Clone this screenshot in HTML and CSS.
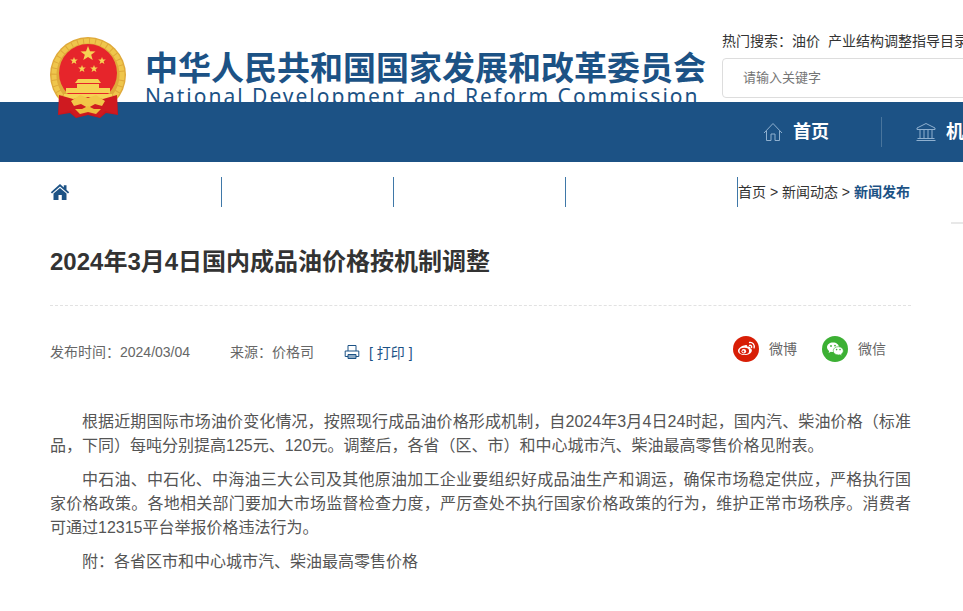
FILE: index.html
```html
<!DOCTYPE html>
<html lang="zh-CN">
<head>
  <meta charset="UTF-8" />
  <meta name="viewport" content="width=device-width, initial-scale=1.0"/>
  <title>2024年3月4日国内成品油价格按机制调整</title>
  <link rel="stylesheet" href="styles.css">
</head>
<body>
  <header class="header">
    <a class="logo" href="#">
      <svg class="emblem" viewBox="0 0 76 82" aria-hidden="true">
        <path d="M9 56L67 56 68 78 56 76 50 81 38 78 26 81 20 76 8 78Z" fill="#c8161d"/>
        <circle cx="38" cy="38" r="38" fill="#dfa93a"/>
        <circle cx="38" cy="38" r="34" fill="none" stroke="#efc64c" stroke-width="5" stroke-dasharray="5 1"/>
        <circle cx="38" cy="36" r="29" fill="#e6252b"/>
        <path d="M38 9l2 5.200 5.500.2-4.300 3.400 1.500 5.300-4.700-3-4.700 3 1.500-5.300-4.300-3.400 5.500-.2z" fill="#f6d254"/>
        <path d="M24 20l1 2.500 2.800.1-2.200 1.700.8 2.700-2.400-1.500-2.400 1.500.8-2.700-2.200-1.700 2.800-.1zM52 20l1 2.500 2.800.1-2.200 1.700.8 2.700-2.400-1.500-2.400 1.500.8-2.700-2.200-1.700 2.800-.1zM32 28l1 2.500 2.800.1-2.200 1.700.8 2.700-2.400-1.500-2.400 1.500.8-2.700-2.200-1.700 2.800-.1zM44 28l1 2.500 2.800.1-2.200 1.700.8 2.700-2.400-1.500-2.400 1.500.8-2.700-2.200-1.700 2.800-.1z" fill="#f6d254"/>
        <path d="M28 42h20l3 4H25zM27 47h22v4h11v5H16v-5h11zM14 57h48v5H14z" fill="#f6d254"/>
        <path d="M9 58l14 4 15-2 15 2 14-4v19l-12-3-5 6-12-4-12 4-5-6-12 3z" fill="#cf1a20"/>
        <path d="M21 64l9-6 8 3 8-3 9 6-3 5-7-2-7 4-7-4-7 2z" fill="#f2c648"/>
        <path d="M25 72l7 0 6-3 6 3 7 0-5 5-8-2-8 2z" fill="#eebd3f"/>
      </svg>
      <span class="logo-text">
        <span class="logo-cn">中华人民共和国国家发展和改革委员会</span>
        <span class="logo-en" lang="en">National Development and Reform Commission</span>
      </span>
    </a>
    <form class="search">
      <p class="hot">热门搜索：<a href="#">油价</a><a href="#">产业结构调整指导目录</a></p>
      <input class="search-input" type="text" placeholder="请输入关键字" aria-label="请输入关键字">
    </form>
  </header>

  <nav class="nav">
    <a class="nav-item" href="#">
      <svg class="nav-icon" viewBox="0 0 20 20" aria-hidden="true">
        <path d="M1 11L10 1.500l9 9.500M3.500 9v9.500h4.500v-6.500h4v6.500h4.500V9"/>
      </svg>
      首页
    </a>
    <a class="nav-item" href="#">
      <svg class="nav-icon" viewBox="0 0 20 20" aria-hidden="true">
        <path d="M1 6l9-4.500L19 6v1.500H1zM4 7.500v9M8 7.500v9M12 7.500v9M16 7.500v9M1.500 16.500h17M.5 18.500h19"/>
      </svg>
      机构设置
    </a>
  </nav>

  <div class="crumb-bar">
    <a class="crumb-cell" href="#" aria-label="首页">
      <svg class="home-icon" viewBox="0 0 20 18" aria-hidden="true">
        <path d="M10 1L.8 9.200l1.200 1.300L10 3.500l8 7 1.200-1.300-2.700-2.400V2.200h-2.700v2.200z"/>
        <path d="M3.500 10.500L10 5l6.500 5.500V17h-4.700v-5H8.500v5h-5z"/>
      </svg>
    </a>
    <span class="crumb-cell"></span>
    <span class="crumb-cell"></span>
    <span class="crumb-cell"></span>
    <div class="crumbs">
      <a href="#">首页</a> &gt; <a href="#">新闻动态</a> &gt; <a class="current" href="#">新闻发布</a>
    </div>
  </div>
  <div class="side-line"></div>

  <main class="article">
    <h1 class="title">2024年3月4日国内成品油价格按机制调整</h1>
    <div class="meta">
      <span class="date">发布时间：2024/03/04</span>
      <span class="source">来源：价格司</span>
      <button class="print" type="button">
        <svg class="print-icon" viewBox="0 0 16 16" aria-hidden="true">
          <path d="M4 7V1.500h8V7M4 12.500H1.200V7h13.600v5.500H12"/>
          <path d="M4 10.500h8v4H4z" fill="#8fabc4"/>
        </svg>
        [ 打印 ]
      </button>
      <div class="share">
        <a class="share-item" href="#">
          <svg class="share-icon" viewBox="0 0 26 26" aria-hidden="true">
            <circle cx="13" cy="13" r="13" fill="#d81e06"/>
            <path d="M11 9.500c2-1 3.500-.5 3.300 1.200 2-.7 3.700 0 3.100 1.700 1.300.4 1.700 1.400 1.400 2.600-.7 2.600-3.800 4-7.200 4-3.600 0-6.600-1.600-6.600-4.200 0-2 2.800-4.600 6-5.300z" fill="#fff"/>
            <ellipse cx="11.300" cy="15" rx="4.800" ry="3.200" fill="#d81e06"/>
            <circle cx="10.800" cy="15.200" r="2.300" fill="#fff"/>
            <circle cx="10.300" cy="15.600" r="1" fill="#d81e06"/>
            <path d="M16.500 9.300c1.500-.2 2.400.8 2.100 2.200M16.500 6.500c3.200-.4 5.400 2.200 4.600 5.400" fill="none" stroke="#fff" stroke-width="1.300" stroke-linecap="round"/>
          </svg>
          微博
        </a>
        <a class="share-item" href="#">
          <svg class="share-icon" viewBox="0 0 26 26" aria-hidden="true">
            <circle cx="13" cy="13" r="13" fill="#3cb034"/>
            <path d="M11 6.500c-3.400 0-6 2.100-6 4.800 0 1.500.8 2.800 2.200 3.700L6.600 17l2.300-1.200c.8.2 1.400.3 2.100.3 3.400 0 6-2.100 6-4.800s-2.600-4.800-6-4.800z" fill="#fff"/>
            <path d="M16.300 10.700c-2.900 0-5.100 1.800-5.100 4.100s2.200 4.100 5.100 4.100c.6 0 1.200-.1 1.700-.2l1.900 1-.5-1.700c1.200-.8 1.900-1.900 1.900-3.200 0-2.300-2.200-4.100-5-4.100z" fill="#fff" stroke="#3cb034" stroke-width=".6"/>
            <g fill="#3cb034">
              <circle cx="9" cy="10" r=".9"/>
              <circle cx="13" cy="9.600" r=".9"/>
              <circle cx="14.600" cy="13.600" r=".8"/>
              <circle cx="18" cy="13.600" r=".8"/>
            </g>
          </svg>
          微信
        </a>
      </div>
    </div>
    <div class="content">
      <p>根据近期国际市场油价变化情况，按照现行成品油价格形成机制，自2024年3月4日24时起，国内汽、柴油价格（标准品，下同）每吨分别提高125元、120元。调整后，各省（区、市）和中心城市汽、柴油最高零售价格见附表。</p>
      <p>中石油、中石化、中海油三大公司及其他原油加工企业要组织好成品油生产和调运，确保市场稳定供应，严格执行国家价格政策。各地相关部门要加大市场监督检查力度，严厉查处不执行国家价格政策的行为，维护正常市场秩序。消费者可通过12315平台举报价格违法行为。</p>
      <p>附：各省区市和中心城市汽、柴油最高零售价格</p>
    </div>
  </main>
</body>
</html>
```
FILE: styles.css
```css
* { box-sizing: border-box; }

body {
  margin: 0;
  font-family: "Liberation Sans", "Noto Sans CJK SC", sans-serif;
  font-size: 14px;
  line-height: 20px;
  color: #333;
  background: #fff;
}

a {
  color: inherit;
  text-decoration: none;
}

.header {
  display: flex;
  align-items: flex-start;
  gap: 16px;
  height: 102px;
  padding: 31px 0 0 50px;
  white-space: nowrap;
}

.logo {
  display: flex;
  flex: none;
  gap: 19px;
  color: #1c5285;
}

/* the ribbon hangs over the blue nav */
.emblem {
  position: relative;
  z-index: 1;
  flex: none;
  width: 76px;
  height: 82px;
  margin-top: 6px;
}

.logo-text {
  display: flex;
  flex-direction: column;
  height: 71px;
  padding-top: 22px;
  overflow: hidden;
}

.logo-cn {
  font-size: 33px;
  font-weight: bold;
  line-height: 32px;
}

.logo-en {
  font-family: "Noto Sans", sans-serif;
  font-size: 21px;
  line-height: 22px;
  letter-spacing: 2px;
}

.search {
  flex: 1;
  min-width: 0;
  overflow: hidden;
}

.hot {
  display: flex;
  margin: 0 0 7px;
}

.hot a { margin-right: 8px; }

.search-input {
  width: 320px;
  height: 40px;
  padding: 0 20px 2px;
  border: 1px solid #ddd;
  border-radius: 4px;
  font-family: inherit;
  font-size: 13px;
}

.search-input::placeholder { color: #757575; }

.nav {
  display: flex;
  justify-content: flex-end;
  align-items: center;
  height: 60px;
  background: #1c5285;
  color: #fff;
  font-size: 18px;
  font-weight: bold;
  white-space: nowrap;
}

.nav-item {
  display: flex;
  align-items: center;
  gap: 10px;
  height: 30px;
}

.nav-item + .nav-item {
  width: 82px;
  margin-left: 52px;
  padding-left: 34px;
  border-left: 1px solid #49759d;
  overflow: hidden;
}

.nav-icon {
  flex: none;
  width: 20px;
  height: 20px;
  fill: none;
  stroke: #8fb0cf;
  stroke-width: 1;
}

.crumb-bar {
  display: flex;
  align-items: center;
  height: 60px;
  padding-left: 50px;
  white-space: nowrap;
}

.crumb-cell {
  display: flex;
  flex: 0 1 172px;
  align-items: center;
  height: 30px;
  border-right: 1px solid #3f78a8;
}

.home-icon {
  width: 20px;
  height: 18px;
  fill: #1c5285;
}

.crumbs { flex: none; }

.current {
  color: #1c5285;
  font-weight: bold;
}

.side-line {
  width: 12px;
  height: 2px;
  margin-left: auto;
  background: #e8e8e8;
}

.article {
  max-width: 911px;
  padding-left: 50px;
}

.title {
  margin: 0;
  padding: 20px 0 25px;
  border-bottom: 1px dashed #e2e2e2;
  font-size: 24px;
  line-height: 36px;
}

.meta {
  display: flex;
  align-items: center;
  height: 88px;
  padding-top: 4px;
  color: #666;
}

.date { margin-right: 40px; }

.source { margin-right: 30px; }

.print {
  display: flex;
  align-items: center;
  gap: 9px;
  padding: 0;
  border: none;
  background: none;
  color: #1c5285;
  font-family: inherit;
  font-size: 14px;
  cursor: pointer;
}

.print-icon {
  width: 16px;
  height: 16px;
  fill: none;
  stroke: #1c5285;
  stroke-width: 1;
}

.share {
  display: flex;
  gap: 25px;
  margin: 0 25px 6px auto;
}

.share-item {
  display: flex;
  align-items: center;
  gap: 10px;
}

.share-icon {
  width: 26px;
  height: 26px;
}

.content {
  padding-top: 16px;
  color: #555;
  font-size: 16px;
  line-height: 24px;
  text-align: justify;
}

.content p {
  margin: 0 0 10px;
  text-indent: 2em;
}
```
